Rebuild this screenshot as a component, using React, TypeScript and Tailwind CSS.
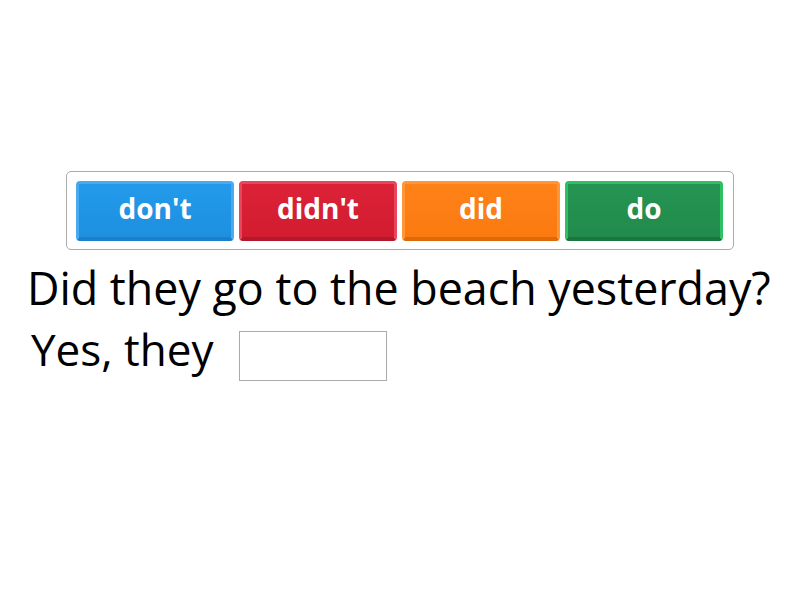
import React from "react";

const btns = [
  { t: "don't", face: "bg-gradient-to-b from-[#229aea] to-[#1e90e0]", edge: "border-t-[#4aaaf0] border-x-[#4aaaf0] border-b-[#1a80cc]" },
  { t: "didn't", face: "bg-gradient-to-b from-[#dc2237] to-[#d21c30]", edge: "border-t-[#e8465a] border-x-[#e8465a] border-b-[#b5182a]" },
  { t: "did", face: "bg-gradient-to-b from-[#fe8218] to-[#fb7a10]", edge: "border-t-[#ff9638] border-x-[#ff9638] border-b-[#dd690b]" },
  { t: "do", face: "bg-gradient-to-b from-[#259452] to-[#218b4c]", edge: "border-t-[#2fc061] border-x-[#2fc061] border-b-[#1b7540]" },
];

export default function App() {
  return (
    <div className="w-[800px] h-[600px] bg-white relative" style={{ fontFamily: '"Open Sans", sans-serif' }}>
      <div className="pt-[171px] pl-[66px]">
        <div className="w-[668px] h-[79px] border border-[#ababab] rounded-[5px] flex gap-[5px] pl-[9px] pt-[9px]">
          {btns.map((b) => (
            <div
              key={b.t}
              className={`w-[158px] h-[60px] rounded-[4px] border-t-[3px] border-x-[3px] border-b-[4px] ${b.face} ${b.edge} flex items-center justify-center text-white font-bold text-[28px] leading-none pb-[5px]`}
            >
              {b.t}
            </div>
          ))}
        </div>
      </div>
      <div className="pl-[27px] mt-[13px] text-[44.8px] leading-[50px] text-black whitespace-nowrap">
        Did they go to the beach yesterday?
      </div>
      <div className="pl-[31px] mt-[18px] flex items-start">
        <span className="-mt-[7px] text-[44px] leading-[50px] text-black whitespace-nowrap">Yes, they</span>
        <div className="ml-[25px] w-[148px] h-[50px] border border-[#aaaaaa] bg-white"></div>
      </div>
    </div>
  );
}
